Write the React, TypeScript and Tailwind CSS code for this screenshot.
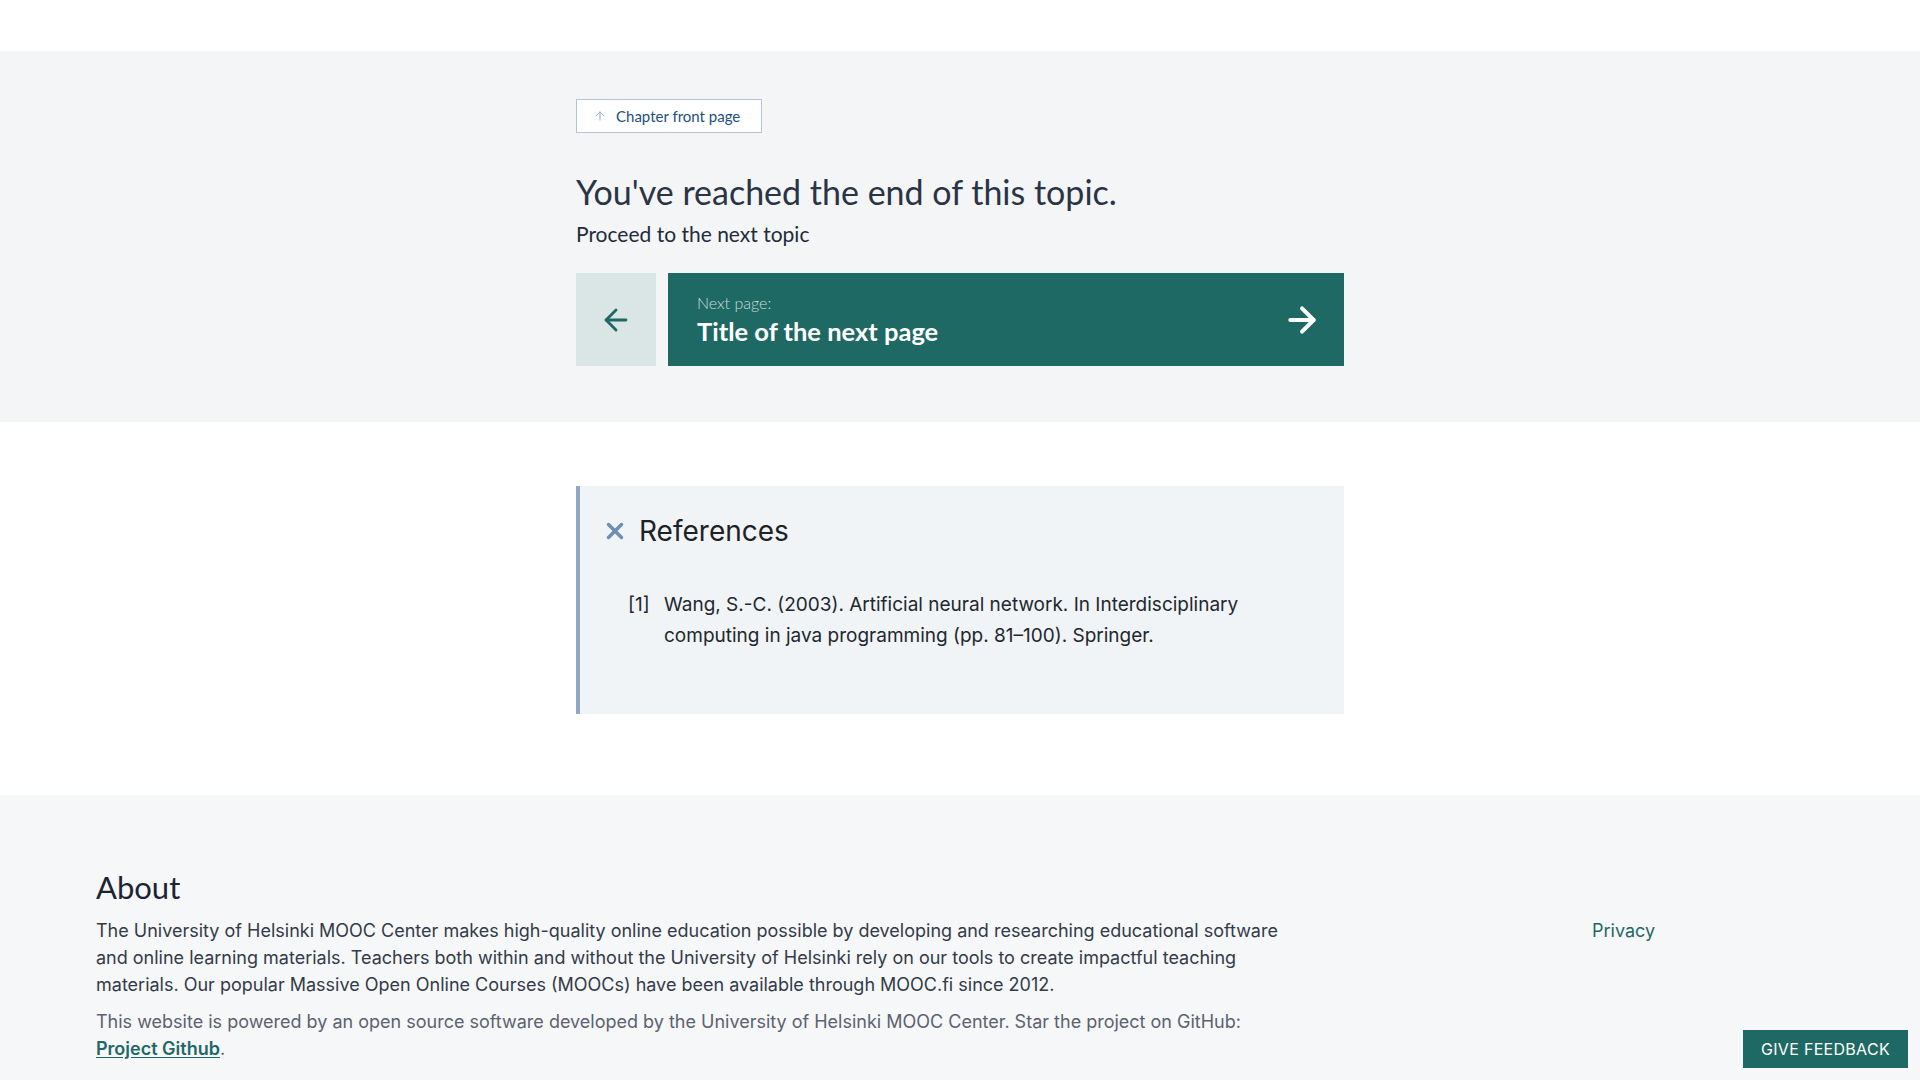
import { ArrowLeft, ArrowRight, ArrowUp, X } from "lucide-react"

const heading = { fontFamily: "Lato, 'Open Sans', sans-serif" }
const body = { fontFamily: "Inter, 'Noto Sans', sans-serif" }

function TopicEnd() {
  return (
    <section className="bg-[#f4f5f7] pt-[48px] pb-[56px]">
      <div className="w-[768px] mx-auto">
        <a
          href="#"
          className="inline-flex items-center gap-[9px] h-[34px] w-[186px] pl-[16px] border border-[#b3c5d8] bg-white text-[15px] text-[#1d4f7f]"
          style={heading}
        >
          <ArrowUp className="w-[14px] h-[14px] text-[#8aa3bd]" strokeWidth={1.5} />
          Chapter front page
        </a>
        <h2 className="mt-[39px] text-[34px] leading-[40px] text-[#2a3445]" style={heading}>
          You've reached the end of this topic.
        </h2>
        <p className="mt-[8px] text-[21px] leading-[28px] text-[#222c3a]" style={heading}>
          Proceed to the next topic
        </p>
        <div className="mt-[25px] flex gap-[12px] h-[93px]">
          <button className="w-[80px] flex items-center justify-center bg-[#d9e6e5]">
            <ArrowLeft className="w-[34px] h-[34px] text-[#1f6964]" strokeWidth={2} />
          </button>
          <a href="#" className="flex-1 flex items-center justify-between bg-[#1f6964] pl-[29px] pr-[22px]" style={heading}>
            <div className="flex flex-col">
              <span className="text-[16px] leading-[20px] font-light text-[#c9dedb]">Next page:</span>
              <span className="mt-[3px] text-[25.5px] leading-[30px] font-bold text-white">Title of the next page</span>
            </div>
            <ArrowRight className="w-[40px] h-[40px] text-white" strokeWidth={2.4} />
          </a>
        </div>
      </div>
    </section>
  )
}

function References() {
  return (
    <section className="bg-white pt-[64px] pb-[81px]">
      <div className="w-[768px] mx-auto border-l-4 border-[#8fa9c4] bg-[#f0f4f7] h-[228px] pt-[28px] pl-[22px]" style={body}>
        <div className="flex items-center gap-[11px]">
          <X className="w-[26px] h-[26px] text-[#6d8fb1]" strokeWidth={3.2} />
          <h3 className="text-[28px] leading-[34px] text-[#1e2227]">References</h3>
        </div>
        <div className="mt-[41px] pl-[26px] flex text-[19px] leading-[31px] text-[#22272e]">
          <span className="w-[36px] shrink-0">[1]</span>
          <span className="w-[600px]">
            Wang, S.-C. (2003). Artificial neural network. In Interdisciplinary computing in java programming (pp. 81–100). Springer.
          </span>
        </div>
      </div>
    </section>
  )
}

function Footer() {
  return (
    <footer className="bg-[#f6f7f9] px-[96px] pt-[73px] pb-[60px]" style={body}>
      <div className="flex justify-between">
        <div className="w-[1200px]">
          <h2 className="text-[31px] leading-[38px] text-[#1b2433]" style={heading}>About</h2>
          <p className="mt-[11px] text-[18px] leading-[27px] text-[#333b48]">
            The University of Helsinki MOOC Center makes high-quality online education possible by developing and researching educational software and online learning materials. Teachers both within and without the University of Helsinki rely on our tools to create impactful teaching materials. Our popular Massive Open Online Courses (MOOCs) have been available through MOOC.fi since 2012.
          </p>
          <p className="mt-[10px] text-[18px] leading-[27px] text-[#5b6270]">
            This website is powered by an open source software developed by the University of Helsinki MOOC Center. Star the project on GitHub:{" "}
            <br />
            <a href="#" className="font-semibold text-[#1f6964] underline underline-offset-2">Project Github</a>.
          </p>
        </div>
        <div className="w-[232px] pt-[49px]">
          <a href="#" className="text-[18px] leading-[27px] text-[#1f6964]">Privacy</a>
        </div>
      </div>
    </footer>
  )
}

export default function App() {
  return (
    <div className="min-h-screen bg-white">
      <div className="h-[51px] bg-white" />
      <TopicEnd />
      <References />
      <Footer />
      <button
        className="fixed right-[12px] bottom-[12px] h-[38px] w-[165px] bg-[#1f6964] text-white text-[16px] tracking-[0.3px]"
        style={body}
      >
        GIVE FEEDBACK
      </button>
    </div>
  )
}
